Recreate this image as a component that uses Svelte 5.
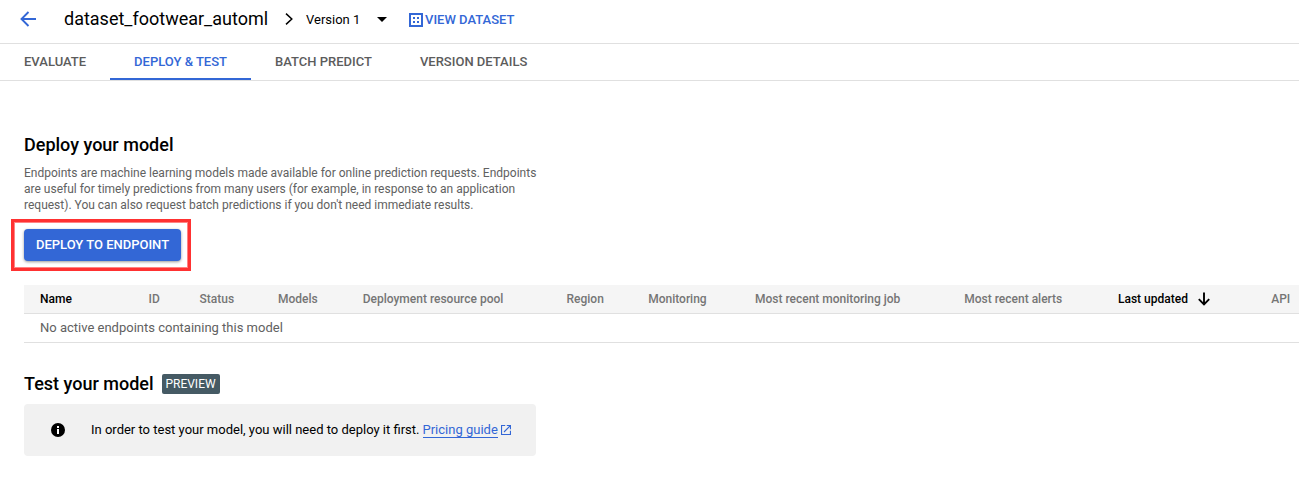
<script>
  const tabs = ['EVALUATE', 'DEPLOY & TEST', 'BATCH PREDICT', 'VERSION DETAILS'];
  const activeTab = 'DEPLOY & TEST';
  const columns = [
    'Name', 'ID', 'Status', 'Models', 'Deployment resource pool', 'Region',
    'Monitoring', 'Most recent monitoring job', 'Most recent alerts', 'Last updated', 'API'
  ];
</script>

<div class="page">
  <header>
    <svg class="back" width="18" height="18" viewBox="0 0 18 18" fill="none" stroke="currentColor" stroke-width="1.9">
      <path d="M17 9H2.7M9.5 2L2.5 9l7 7" />
    </svg>
    <h1>dataset_footwear_automl</h1>
    <svg class="chevron" width="8" height="14" viewBox="0 0 8 14" fill="none" stroke="currentColor" stroke-width="1.5">
      <path d="M1 1.6L6.8 7 1 12.4" />
    </svg>
    <span class="version">Version 1</span>
    <svg class="caret" width="10" height="5" viewBox="0 0 10 5"><path d="M0 0h10L5 5z" fill="currentColor" /></svg>
    <a class="view">
      <svg width="14" height="14" viewBox="0 0 14 14" fill="currentColor" shape-rendering="crispEdges">
        <path fill-rule="evenodd" d="M0 0h14v14H0zM2 2v10h10V2z" />
        <path d="M4 4h2v2H4zM8 4h2v2H8zM4 8h2v2H4zM8 8h2v2H8z" />
      </svg>
      <span>VIEW DATASET</span>
    </a>
  </header>

  <nav>
    {#each tabs as tab}
      <a class="tab" class:active={tab === activeTab}>{tab}</a>
    {/each}
  </nav>

  <main>
    <h2>Deploy your model</h2>
    <p class="intro">
      Endpoints are machine learning models made available for online prediction requests. Endpoints<br />
      are useful for timely predictions from many users (for example, in response to an application<br />
      request). You can also request batch predictions if you don't need immediate results.
    </p>
    <div class="highlight"><button>DEPLOY TO ENDPOINT</button></div>

    <div class="table">
      <div class="head">
        {#each columns as column}
          <span class:dark={column === 'Name' || column === 'Last updated'}>
            {column}
            {#if column === 'Last updated'}
              <svg width="12" height="14" viewBox="0 0 12 14" fill="none" stroke="currentColor" stroke-width="1.9">
                <path d="M6 0.5v12M0.8 7.2L6 12.4l5.2-5.2" />
              </svg>
            {/if}
          </span>
        {/each}
      </div>
      <div class="empty">No active endpoints containing this model</div>
    </div>

    <div class="test-title">
      <h2>Test your model</h2>
      <span class="badge">PREVIEW</span>
    </div>
    <div class="notice">
      <svg class="info" width="14" height="14" viewBox="0 0 14 14">
        <circle cx="7" cy="7" r="7" fill="#000" />
        <path d="M6 3h2v2H6zM6 6h2v5H6z" fill="#fff" />
      </svg>
      <span class="message">In order to test your model, you will need to deploy it first.</span>
      <a class="pricing">Pricing guide</a>
      <svg class="external" width="10" height="10" viewBox="0 0 10 10" fill="none" stroke="currentColor" stroke-width="1.1">
        <path d="M4.2.55H.55v8.9h8.9V5.8M5.8.55h3.65V4.2M9.3.7L3 7" />
      </svg>
    </div>
  </main>
</div>

<style>
  :global(body) { background: #fff; overflow: hidden; }
  .page {
    width: 100%;
    height: 490px;
    overflow: hidden;
    font-family: Roboto, sans-serif;
    font-size: 13px;
    color: #000;
  }
  svg { display: block; flex: none; }
  header {
    display: flex;
    align-items: center;
    height: 43px;
    box-sizing: border-box;
    padding: 0 0 5px 19px;
    white-space: nowrap;
  }
  .back { color: #3367d6; }
  h1 { margin: 0 0 0 27px; width: 204px; font-size: 18px; line-height: 24px; font-weight: 400; }
  .chevron { margin-left: 17px; margin-top: -1px; }
  .version { margin-left: 13px; width: 54px; }
  .caret { margin-left: 17px; }
  .view { display: flex; align-items: center; margin-left: 22px; color: #3367d6; font-weight: 500; gap: 2px; padding-top: 1px; }
  nav {
    display: flex;
    height: 38px;
    box-sizing: border-box;
    border-top: 1px solid #e0e0e0;
    border-bottom: 1px solid #e0e0e0;
  }
  .tab {
    height: 36px;
    box-sizing: border-box;
    padding: 0 24px;
    line-height: 36px;
    font-weight: 500;
    color: #5c5c5c;
    white-space: nowrap;
  }
  .active { color: #3367d6; border-bottom: 2px solid #3367d6; }
  main { padding: 52px 0 0 24px; }
  h2 { margin: 0; font-size: 18px; line-height: 24px; font-weight: 500; }
  .intro { margin: 8px 0 0; font-size: 12px; line-height: 16px; color: #616161; white-space: nowrap; }
  .highlight {
    margin: 6px 0 0 -13px;
    width: 180px;
    height: 52px;
    box-sizing: border-box;
    border: 3px solid #ff3131;
    box-shadow: inset 0 0 0 1px rgba(255, 49, 49, .6);
    padding: 7px 0 0 10px;
  }
  button {
    display: block;
    width: 157px;
    height: 32px;
    padding: 0 0 2px;
    border: 0;
    border-radius: 4px;
    background: #3367d6;
    color: #fff;
    font: 500 13px Roboto, sans-serif;
    white-space: nowrap;
    box-shadow: 0 1px 3px rgba(0, 0, 0, .4);
  }
  .table { margin-top: 14px; }
  .head {
    display: grid;
    grid-template-columns: 108.5px 51px 78.5px 84.7px 203.8px 81.7px 106.8px 209.3px 153.7px 153.3px 1fr;
    height: 29px;
    box-sizing: border-box;
    padding-left: 16px;
    border-bottom: 1px solid #e0e0e0;
    background: #f5f5f5;
    color: #757575;
    font-size: 12px;
    font-weight: 500;
    line-height: 28px;
    white-space: nowrap;
  }
  .head span { display: flex; align-items: center; gap: 10px; }
  .head .dark { color: #000; }
  .empty { height: 28px; padding-left: 16px; line-height: 28px; color: #616161; border-bottom: 1px solid #e0e0e0; }
  .test-title { display: flex; align-items: center; margin-top: 29px; height: 24px; }
  .badge {
    margin-left: 8px;
    width: 58px;
    height: 20px;
    border-radius: 2px;
    background: #455a64;
    color: #fff;
    font-size: 12px;
    line-height: 20px;
    text-align: center;
  }
  .notice {
    display: flex;
    align-items: center;
    width: 512px;
    height: 52px;
    box-sizing: border-box;
    margin-top: 8px;
    padding-left: 27px;
    border-radius: 4px;
    background: #f1f1f1;
    white-space: nowrap;
  }
  .info { margin-right: 26px; }
  .message { padding-bottom: 2px; }
  .pricing { margin-left: 3px; color: #3367d6; line-height: 15px; border-bottom: 1px solid #3367d6; }
  .external { margin-left: 3px; color: #3367d6; }
</style>
